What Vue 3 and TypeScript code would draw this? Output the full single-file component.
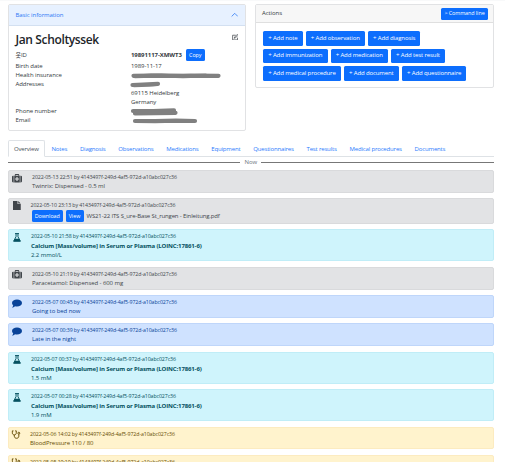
<script setup lang="ts">
type Kind = 'medication' | 'document' | 'lab' | 'note' | 'vital'

interface Entry {
  kind: Kind
  time: string
  title?: string
  text: string
}

interface InfoRow {
  label: string
  value?: string
  redacted?: 'insurance' | 'street' | 'phone' | 'email'
}

const author = '4143497f-249d-4af5-972d-a10abc027c36'
const calcium = 'Calcium [Mass/volume] in Serum or Plasma (LOINC:17861-6)'

const info: InfoRow[] = [
  { label: 'Birth date', value: '1989-11-17' },
  { label: 'Health insurance', redacted: 'insurance' },
  { label: 'Addresses', redacted: 'street' },
  { label: '', value: '69115 Heidelberg' },
  { label: '', value: 'Germany' },
  { label: 'Phone number', redacted: 'phone' },
  { label: 'Email', redacted: 'email' },
]

const strokes: Record<string, string> = {
  insurance: 'M2.500 4.800 L20 4.600 L38 5 L60 4.700 L87.500 4.800 M4 5.200 L30 4.400 L52 5.200 L75 4.500',
  street: 'M1.500 5 L12 4.600 L27 3.800 M3 5.200 L18 4.600 L26 4.200',
  phone: 'M2 4 L22 4 L43 3.400 M4 6.500 L24 6.200 L44.500 5.800',
  email: 'M4 5 L24 5.200 L45 4.700 L64 5',
}

const actions: string[][] = [
  ['note', 'observation', 'diagnosis'],
  ['immunization', 'medication', 'test result'],
  ['medical procedure', 'document', 'questionnaire'],
]

const tabs: string[] = [
  'Overview', 'Notes', 'Diagnosis', 'Observations', 'Medications', 'Equipment',
  'Questionnaires', 'Test results', 'Medical procedures', 'Documents',
]

const entries: Entry[] = [
  { kind: 'medication', time: '2022-05-13 22:51', text: 'Twinrix: Dispensed - 0.5 ml' },
  { kind: 'document', time: '2022-05-10 23:13', text: 'WS21-22 ITS S_ure-Base St_rungen - Einleitung.pdf' },
  { kind: 'lab', time: '2022-05-10 21:58', title: calcium, text: '2.2 mmol/L' },
  { kind: 'medication', time: '2022-05-10 21:19', text: 'Paracetamol: Dispensed - 600 mg' },
  { kind: 'note', time: '2022-05-07 00:45', text: 'Going to bed now' },
  { kind: 'note', time: '2022-05-07 00:39', text: 'Late in the night' },
  { kind: 'lab', time: '2022-05-07 00:37', title: calcium, text: '1.5 mM' },
  { kind: 'lab', time: '2022-05-07 00:28', title: calcium, text: '1.9 mM' },
  { kind: 'vital', time: '2022-05-06 14:02', text: 'BloodPressure 110 / 80' },
  { kind: 'vital', time: '2022-05-05 19:19', text: '' },
]
</script>

<template>
  <div class="page">
    <div class="topbar"></div>
    <div class="cards">
      <section class="card basic">
        <header class="basic-head">
          <span>Basic information</span>
          <svg class="chevron" viewBox="0 0 16 16"><path d="M2 11 L8 5 L14 11" fill="none" stroke="currentColor" stroke-width="1.7" stroke-linecap="round" stroke-linejoin="round" /></svg>
        </header>
        <div class="basic-body">
          <div class="name-row">
            <h1>Jan Scholtyssek</h1>
            <svg class="edit" viewBox="0 0 16 16" fill="none" stroke="currentColor" stroke-width="1.7"><path d="M13.500 9 V14.500 H1.500 V3 H9" /><path d="M5.500 10.500 L6.500 7.500 L13 1 L15 3 L8.500 9.500 Z" /></svg>
          </div>
          <div class="row id-row">
            <span class="label">웃ID</span>
            <strong>19891117-XMWT3</strong>
            <button class="btn copy">Copy</button>
          </div>
          <div v-for="(r, i) in info" :key="i" class="row">
            <span class="label">{{ r.label }}</span>
            <span v-if="r.value">{{ r.value }}</span>
            <svg v-else-if="r.redacted" class="scribble" viewBox="0 0 92 9"><path :d="strokes[r.redacted]" /></svg>
          </div>
        </div>
      </section>

      <section class="card actions">
        <header class="actions-head">
          <span>Actions</span>
          <button class="btn command">&gt; Command line</button>
        </header>
        <div class="actions-body">
          <div v-for="(line, i) in actions" :key="i" class="action-line">
            <button v-for="a in line" :key="a" class="btn add">+ Add {{ a }}</button>
          </div>
        </div>
      </section>
    </div>

    <nav class="tabs">
      <a v-for="(t, i) in tabs" :key="t" class="tab" :class="{ active: i === 0 }">{{ t }}</a>
    </nav>

    <div class="now"><span>Now</span></div>

    <main class="timeline">
      <article v-for="(e, i) in entries" :key="i" class="entry" :class="e.kind">
        <svg v-if="e.kind === 'medication'" class="icon" viewBox="0 0 18 16" fill="currentColor"><path fill-rule="evenodd" d="M5 3 V1.500 Q5 0 6.500 0 H11.500 Q13 0 13 1.500 V3 H14 V15 H4 V3 Z M6.500 3 H11.500 V1.500 H6.500 Z M8 5.500 V8 H5.500 V10 H8 V12.500 H10 V10 H12.500 V8 H10 V5.500 Z" /><path d="M3 3 V15 H2 Q0 15 0 13 V5 Q0 3 2 3 Z M15 3 H16 Q18 3 18 5 V13 Q18 15 16 15 H15 Z" /></svg>
        <svg v-else-if="e.kind === 'document'" class="icon" viewBox="0 0 16 18" fill="currentColor"><path d="M0 0 H9 V6 H15.500 V18 H0 Z M10.500 0 L15.500 4.800 H10.500 Z" /></svg>
        <svg v-else-if="e.kind === 'lab'" class="icon" viewBox="0 0 16 16"><path d="M4.500 1 H11.500 M6.300 1 V6.500 L2 14.500 H14 L9.700 6.500 V1" fill="none" stroke="currentColor" stroke-width="1.700" /><path d="M4.700 10 H11.300 L14.500 15.300 H1.500 Z" fill="currentColor" /></svg>
        <svg v-else-if="e.kind === 'note'" class="icon" viewBox="0 0 18 16" fill="currentColor"><path d="M9 1 C14 1 18 3.700 18 7.300 C18 11 14 13.500 9 13.500 C7.800 13.500 6.500 13.300 5.500 13 C4 14.400 2 15.300 0 15.300 C1.300 14 2 12.700 2.200 11.500 C.8 10.300 0 9 0 7.300 C0 3.700 4 1 9 1 Z" /></svg>
        <svg v-else class="icon" viewBox="0 0 16 16" fill="none" stroke="currentColor" stroke-width="1.700"><path d="M3.500 1.500 H1.500 V5 C1.500 10 8.500 10 8.500 5 V1.500 H6.500 M5 8.700 V11 C5 16 13 16 13 11 V7.500" /><circle cx="13" cy="5.700" r="1.700" /></svg>
        <div class="content">
          <small>{{ e.time }} by {{ author }}</small>
          <strong v-if="e.title">{{ e.title }}</strong>
          <div v-if="e.text" class="text">
            <template v-if="e.kind === 'document'">
              <button class="btn file download">Download</button>
              <button class="btn file view">View</button>
            </template>
            <span>{{ e.text }}</span>
          </div>
        </div>
      </article>
    </main>
  </div>
</template>

<style>
html, body { margin: 0; background: #fff; overflow: hidden; }
</style>

<style scoped>
.page {
  box-sizing: border-box;
  width: 505px;
  height: 462px;
  overflow: hidden;
  padding: 0 11px 0 7.5px;
  font: 6px/9px "Open Sans", "Noto Sans", "Noto Sans CJK KR", sans-serif;
  letter-spacing: -0.07px;
  color: #343a40;
  white-space: nowrap;
}
.topbar { height: 1px; margin: 0 -11px 3px -7.5px; background: #f8f9fa; }
.cards { display: flex; gap: 9px; align-items: flex-start; height: 135.5px; }
.card { box-sizing: border-box; border: 1px solid #e1e2e4; border-radius: 2px; background: #fff; }
.basic { width: 238.5px; height: 127px; }
.basic-head {
  box-sizing: border-box;
  display: flex;
  align-items: center;
  justify-content: space-between;
  height: 21px;
  padding: 0 7px;
  background: #e7f1ff;
  border-bottom: 1px solid #d3e0f1;
  color: #2b78f5;
}
.chevron { width: 7.5px; height: 7.5px; }
.basic-body { padding: 6px 7px 0; }
.name-row { display: flex; justify-content: space-between; height: 16px; }
h1 { margin: 0; font-size: 12px; line-height: 16px; font-weight: 600; letter-spacing: -0.36px; color: #212529; }
.edit { width: 6.5px; height: 6.5px; margin-top: 1.5px; }
.row { display: flex; align-items: center; height: 9px; }
.id-row { height: 14px; }
.id-row strong { margin-right: 4px; }
.label { width: 115.5px; flex: none; }
.scribble { width: 92px; height: 9px; flex: none; overflow: visible; }
.scribble path { fill: none; stroke: #808080; stroke-width: 4.2; stroke-linecap: round; stroke-linejoin: round; }
.btn {
  box-sizing: border-box;
  display: inline-flex;
  align-items: center;
  justify-content: center;
  flex: none;
  margin: 0;
  padding: 0;
  border: 0;
  border-radius: 1.5px;
  background: #0d6efd;
  color: #fff;
  font: inherit;
  letter-spacing: inherit;
}
.copy { width: 19px; height: 12px; font-size: 5.4px; }
.actions { width: 239px; height: 84px; }
.actions-head {
  box-sizing: border-box;
  display: flex;
  align-items: center;
  justify-content: space-between;
  height: 18px;
  padding: 0 5px 0 6px;
  background: #f7f7f7;
  border-bottom: 1px solid #dfdfdf;
}
.command { width: 47px; height: 12px; font-size: 5.4px; }
.actions-body { display: flex; flex-direction: column; gap: 3px; padding: 8px 7px; }
.action-line { display: flex; gap: 3px; }
.add { height: 14.5px; padding: 0 5.2px; letter-spacing: -0.12px; }
.tabs { display: flex; height: 16px; border-bottom: 1px solid #dee2e6; letter-spacing: -0.16px; }
.tab { box-sizing: border-box; height: 17px; padding: 0 5.4px; border: 1px solid transparent; line-height: 16px; color: #2b7bfd; }
.tab.active { background: #fff; border-color: #dee2e6 #dee2e6 #fff; border-radius: 2px 2px 0 0; color: #495057; }
.now { display: flex; align-items: center; gap: 4px; height: 9px; margin: 1.5px 0 3px; color: #6c757d; }
.now::before, .now::after { content: ""; flex: 1; height: 1px; background: #777; }
.timeline { display: flex; flex-direction: column; gap: 5.5px; }
.entry {
  box-sizing: border-box;
  display: flex;
  flex: none;
  height: 22.8px;
  padding: 2px 3.5px;
  border: 1px solid;
  border-radius: 2px;
}
.icon { width: 10px; height: 9px; flex: none; margin-top: 0.5px; }
.content { display: flex; flex-direction: column; margin-left: 10px; }
small { font-size: 5.25px; line-height: 9px; letter-spacing: -0.1px; }
.content > strong { line-height: 10px; letter-spacing: -0.13px; }
.text { display: flex; align-items: center; height: 9px; }
.medication, .document { background: #e2e3e5; border-color: #d9dadc; color: #41464b; }
.document { height: 25.5px; }
.document .content { margin-left: 8.5px; }
.document .icon { margin-top: 0; }
.document .text { height: 12px; padding-left: 1.5px; letter-spacing: -0.14px; }
.file { height: 12px; margin-right: 3px; font-size: 5.4px; letter-spacing: -0.06px; }
.download { width: 30.5px; }
.view { width: 18px; }
.lab { height: 32px; background: #cff4fc; border-color: #c0edf7; color: #055160; }
.lab .content { margin-left: 9px; }
.note { background: #cfe2ff; border-color: #bfd6fa; color: #084298; }
.vital { background: #fff3cd; border-color: #fcebc0; color: #664d03; }
.vital .icon { margin-left: -1px; }
.vital .content { margin-left: 9px; }
</style>
